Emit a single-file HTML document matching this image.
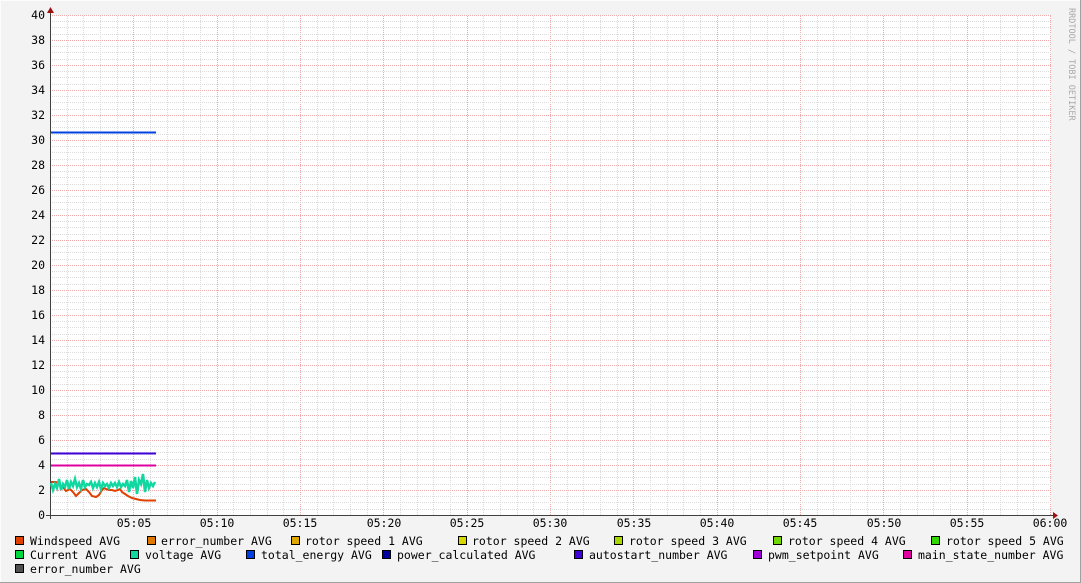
<!DOCTYPE html>
<html><head><meta charset="utf-8"><style>
html,body{margin:0;padding:0;background:#f3f3f3}
svg{display:block}
text{font-family:"DejaVu Sans Mono","Liberation Mono",monospace;font-size:11.5px;fill:#000}
</style></head><body>
<svg width="1081" height="583" xmlns="http://www.w3.org/2000/svg">
<defs>
<pattern id="gy" x="0" y="15" width="10" height="25" patternUnits="userSpaceOnUse">
<g shape-rendering="crispEdges" stroke-dasharray="1,1">
<line x1="0" y1="6.5" x2="10" y2="6.5" stroke="#dcdcdc"/>
<line x1="0" y1="12.5" x2="10" y2="12.5" stroke="#dcdcdc"/>
<line x1="0" y1="19.5" x2="10" y2="19.5" stroke="#dcdcdc"/>
<line x1="0" y1="0.5" x2="10" y2="0.5" stroke="#eeaaaa"/>
</g></pattern>
<pattern id="gx" x="50" y="0" width="250" height="10" patternUnits="userSpaceOnUse">
<g shape-rendering="crispEdges" stroke-dasharray="1,1" stroke="#dcdcdc">
<path d="M17.5 0V10M33.5 0V10M50.5 0V10M67.5 0V10M100.5 0V10M117.5 0V10M133.5 0V10M150.5 0V10M183.5 0V10M200.5 0V10M217.5 0V10M233.5 0V10"/>
<path stroke="#eeaaaa" d="M0.5 0V10M83.5 0V10M167.5 0V10"/>
</g></pattern>
</defs>
<rect x="0" y="0" width="1081" height="583" fill="#f3f3f3"/>
<line x1="0" y1="0.5" x2="1081" y2="0.5" stroke="#fcfcfc"/>
<line x1="0.5" y1="0" x2="0.5" y2="583" stroke="#fcfcfc"/>
<line x1="1080.5" y1="0" x2="1080.5" y2="583" stroke="#a0a0a0"/>
<line x1="0" y1="582.5" x2="1081" y2="582.5" stroke="#a0a0a0"/>
<rect x="50" y="15" width="1001" height="500" fill="#fff"/>
<rect x="51" y="15" width="1000" height="500" fill="url(#gx)"/>
<rect x="51" y="15" width="1000" height="500" fill="url(#gy)"/>
<!-- axes -->
<line x1="50.5" y1="10" x2="50.5" y2="519" stroke="#404040"/>
<line x1="46" y1="515.5" x2="1055" y2="515.5" stroke="#404040"/>
<polygon points="47,13 54,13 50.5,7" fill="#a01010"/>
<polygon points="1053,512 1053,519 1058,515.5" fill="#a01010"/>
<g text-anchor="end">
<text x="45" y="19">40</text><text x="45" y="44">38</text><text x="45" y="69">36</text><text x="45" y="94">34</text><text x="45" y="119">32</text><text x="45" y="144">30</text><text x="45" y="169">28</text><text x="45" y="194">26</text><text x="45" y="219">24</text><text x="45" y="244">22</text><text x="45" y="269">20</text><text x="45" y="294">18</text><text x="45" y="319">16</text><text x="45" y="344">14</text><text x="45" y="369">12</text><text x="45" y="394">10</text><text x="45" y="419">8</text><text x="45" y="444">6</text><text x="45" y="469">4</text><text x="45" y="494">2</text><text x="45" y="519">0</text>
</g>
<g text-anchor="middle">
<text x="134" y="527">05:05</text><text x="217" y="527">05:10</text><text x="300" y="527">05:15</text><text x="384" y="527">05:20</text><text x="467" y="527">05:25</text><text x="550" y="527">05:30</text><text x="634" y="527">05:35</text><text x="717" y="527">05:40</text><text x="800" y="527">05:45</text><text x="884" y="527">05:50</text><text x="967" y="527">05:55</text><text x="1050" y="527">06:00</text>
</g>
<text transform="translate(1069,8) rotate(90)" style="font-size:8.5px;fill:#a8a8a8">RRDTOOL / TOBI OETIKER</text>
<!-- data -->
<line x1="51" y1="132.5" x2="156" y2="132.5" stroke="#0040e0" stroke-width="2"/>
<line x1="51" y1="453.5" x2="156" y2="453.5" stroke="#4000d8" stroke-width="2"/>
<line x1="51" y1="465.5" x2="156" y2="465.5" stroke="#e000a0" stroke-width="2"/>
<polyline fill="none" stroke="#e04000" stroke-width="2" points="51,482 56,482 60,485 63,487 66,491 70,489 73,492 76,496 79,493 82,490 86,489 89,492 92,496 96,497 99,495 102,490 104,488 106,489 109,490 112,490 115,491 118,490 120,489 122,492 125,494 128,496 132,498 136,499 140,500 145,500.5 156,500.5"/>
<polyline fill="none" stroke="#10d8a0" stroke-width="2.5" points="51,483 53,490 55,484 57,488 59,479 61,490 63,484 65,487 67,480 69,489 71,482 73,486 75,479 77,487 79,483 81,489 83,480 85,487 87,484 89,485 91,482 93,488 95,483 97,487 99,482 101,489 103,483 105,486 107,484 109,488 111,483 113,486 115,483 117,487 119,482 121,487 123,484 125,486 127,480 129,492 131,481 133,488 135,477 137,494 139,480 141,484 143,474 145,492 147,480 149,488 151,483 153,486 155,482"/>
<!-- legend -->
<g stroke="#000" stroke-width="1">
<rect x="15.5" y="536.5" width="8" height="8" fill="#e04000"/>
<rect x="147.5" y="536.5" width="8" height="8" fill="#e07800"/>
<rect x="291.5" y="536.5" width="8" height="8" fill="#e0a800"/>
<rect x="458.5" y="536.5" width="8" height="8" fill="#d8d800"/>
<rect x="614.5" y="536.5" width="8" height="8" fill="#a8d800"/>
<rect x="773.5" y="536.5" width="8" height="8" fill="#70d800"/>
<rect x="931.5" y="536.5" width="8" height="8" fill="#30d800"/>
<rect x="15.5" y="550.5" width="8" height="8" fill="#00d840"/>
<rect x="130.5" y="550.5" width="8" height="8" fill="#10d8a0"/>
<rect x="246.5" y="550.5" width="8" height="8" fill="#0040e0"/>
<rect x="382.5" y="550.5" width="8" height="8" fill="#0000a0"/>
<rect x="574.5" y="550.5" width="8" height="8" fill="#4000d8"/>
<rect x="753.5" y="550.5" width="8" height="8" fill="#a000d8"/>
<rect x="903.5" y="550.5" width="8" height="8" fill="#e000a0"/>
<rect x="15.5" y="564.5" width="8" height="8" fill="#505050"/>
</g>
<text x="30" y="545">Windspeed AVG</text>
<text x="161" y="545">error_number AVG</text>
<text x="305" y="545">rotor speed 1 AVG</text>
<text x="472" y="545">rotor speed 2 AVG</text>
<text x="629" y="545">rotor speed 3 AVG</text>
<text x="788" y="545">rotor speed 4 AVG</text>
<text x="946" y="545">rotor speed 5 AVG</text>
<text x="30" y="559">Current AVG</text>
<text x="145" y="559">voltage AVG</text>
<text x="261" y="559">total_energy AVG</text>
<text x="397" y="559">power_calculated AVG</text>
<text x="589" y="559">autostart_number AVG</text>
<text x="768" y="559">pwm_setpoint AVG</text>
<text x="918" y="559">main_state_number AVG</text>
<text x="30" y="573">error_number AVG</text>
</svg>
</body></html>
